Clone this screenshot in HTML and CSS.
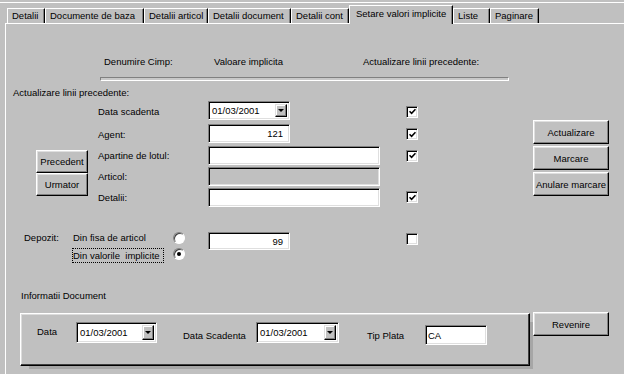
FILE: index.html
```html
<!DOCTYPE html>
<html lang="ro">
<head>
    <meta charset="UTF-8">
    <title>Setare valori implicite</title>
    <link rel="stylesheet" href="styles.css">
</head>
<body>
<div class="window">
    <!--taburi-->
    <div class="tabs">
        <div class="tab">Detalii</div>
        <div class="tab">Documente de baza</div>
        <div class="tab">Detalii articol</div>
        <div class="tab">Detalii document</div>
        <div class="tab">Detalii cont</div>
        <div class="tab active">Setare valori implicite</div>
        <div class="tab">Liste</div>
        <div class="tab">Paginare</div>
    </div>

    <div class="panel">
        <div class="colHeads">
            <span>Denumire Cimp:</span>
            <span>Valoare implicita</span>
            <span>Actualizare linii precedente:</span>
        </div>
        <div class="groove"></div>
        <div class="sectionTitle">Actualizare linii precedente:</div>

        <!--campuri-->
        <div class="rows">
            <div class="navBtns">
                <div class="btn">Precedent</div>
                <div class="btn">Urmator</div>
            </div>
            <div class="sideBtns">
                <div class="btn">Actualizare</div>
                <div class="btn">Marcare</div>
                <div class="btn">Anulare marcare</div>
            </div>

            <div class="lbl">Data scadenta</div>
            <div class="combo short">
                <span class="comboText">01/03/2001</span>
                <span class="dropBtn"><i class="arrow"></i></span>
            </div>
            <div class="checkCell"><span class="check on"><svg viewBox="0 0 7 7" width="7" height="7"><path d="M0.5 3.2 L2.6 5.3 L6.5 1.2" fill="none" stroke="#000" stroke-width="1.6"/></svg></span></div>

            <div class="lbl">Agent:</div>
            <div class="input short right">121</div>
            <div class="checkCell"><span class="check on"><svg viewBox="0 0 7 7" width="7" height="7"><path d="M0.5 3.2 L2.6 5.3 L6.5 1.2" fill="none" stroke="#000" stroke-width="1.6"/></svg></span></div>

            <div class="lbl">Apartine de lotul:</div>
            <div class="input"></div>
            <div class="checkCell"><span class="check on"><svg viewBox="0 0 7 7" width="7" height="7"><path d="M0.5 3.2 L2.6 5.3 L6.5 1.2" fill="none" stroke="#000" stroke-width="1.6"/></svg></span></div>

            <div class="lbl">Articol:</div>
            <div class="input disabled"></div>

            <div class="lbl">Detalii:</div>
            <div class="input"></div>
            <div class="checkCell"><span class="check on"><svg viewBox="0 0 7 7" width="7" height="7"><path d="M0.5 3.2 L2.6 5.3 L6.5 1.2" fill="none" stroke="#000" stroke-width="1.6"/></svg></span></div>
        </div>

        <!--depozit-->
        <div class="depozit">
            <div class="dLbl">Depozit:</div>
            <div class="dLbl">Din fisa de articol</div>
            <div class="radioCell"><span class="radio"></span></div>
            <div class="input short right dInput">99</div>
            <div class="dCheck"><span class="check"></span></div>
            <div class="focusLbl">Din valorile&nbsp; implicite</div>
            <div class="radioCell second"><span class="radio on"></span></div>
        </div>

        <div class="infoTitle">Informatii Document</div>

        <div class="bottom">
            <div class="groupBox">
                <span class="gLbl gData">Data</span>
                <div class="combo gCombo1">
                    <span class="comboText">01/03/2001</span>
                    <span class="dropBtn"><i class="arrow"></i></span>
                </div>
                <span class="gLbl gScad">Data Scadenta</span>
                <div class="combo gCombo2">
                    <span class="comboText">01/03/2001</span>
                    <span class="dropBtn"><i class="arrow"></i></span>
                </div>
                <span class="gLbl gTip">Tip Plata</span>
                <div class="input gInput">CA</div>
            </div>
            <div class="btn revenire">Revenire</div>
        </div>
    </div>
</div>
</body>
</html>
```

FILE: styles.css
```css
* {
    margin: 0;
    padding: 0;
    box-sizing: border-box;
}

html, body {
    height: 100%;
}

body {
    background: #c0c0c0;
    font-family: "Liberation Sans", Arial, sans-serif;
    font-size: 9.5px;
    color: #000;
    overflow: hidden;
    padding-top: 2px;
}

.window {
    display: flex;
    flex-direction: column;
    height: 100%;
    border-top: 1px solid #fff;
}

/* taburi */
.tabs {
    display: flex;
    align-items: flex-end;
    height: 20px;
    flex-shrink: 0;
    padding-left: 7px;
}

.tab {
    height: 15px;
    line-height: 13px;
    padding-left: 4px;
    border-top: 1px solid #fff;
    border-left: 1px solid #fff;
    border-right: 1px solid #000;
    box-shadow: inset -1px 0 #808080;
    white-space: nowrap;
    overflow: hidden;
}

.tab:nth-child(1) { width: 38px; }
.tab:nth-child(2) { width: 99px; }
.tab:nth-child(3) { width: 64px; }
.tab:nth-child(4) { width: 83px; }
.tab:nth-child(5) { width: 58px; }
.tab:nth-child(6) { width: 104px; }
.tab:nth-child(7) { width: 37px; }
.tab:nth-child(8) { width: 49px; }

.tab.active {
    position: relative;
    z-index: 1;
    height: 19px;
    line-height: 15px;
    padding-left: 6px;
    margin-bottom: -1px;
    background: #c0c0c0;
}

.panel {
    flex-grow: 1;
    min-height: 0;
    margin-left: 5px;
    border-top: 1px solid #fff;
    border-left: 1px solid #fff;
}

.colHeads {
    display: flex;
    height: 12px;
    line-height: 12px;
    margin-top: 32px;
    padding-left: 98px;
}

.colHeads > span:nth-child(1) { width: 110px; }
.colHeads > span:nth-child(2) { width: 149px; }

.groove {
    width: 409px;
    height: 4px;
    margin: 9px 0 0 94px;
    border: 1px solid;
    border-color: #808080 #fff #fff #808080;
    background: #c8c8c8;
}

.sectionTitle {
    line-height: 12px;
    margin: 6px 0 0 7px;
}

/* controale */
.btn {
    display: flex;
    align-items: center;
    justify-content: center;
    background: #c0c0c0;
    border: 1px solid;
    border-color: #fff #000 #000 #fff;
    box-shadow: inset -1px -1px #808080, inset 1px 1px #dfdfdf;
    white-space: nowrap;
}

.input, .combo {
    display: flex;
    align-items: center;
    height: 19px;
    background: #fff;
    border: 1px solid;
    border-color: #808080 #fff #fff #808080;
    box-shadow: inset 1px 1px #000, inset -1px -1px #dfdfdf;
    padding: 0 3px;
}

.input.right {
    justify-content: flex-end;
    padding-right: 6px;
}

.input.disabled {
    background: #c0c0c0;
}

.short {
    width: 82px;
}

.combo {
    padding: 2px 2px 2px 3px;
}

.comboText {
    flex-grow: 1;
}

.dropBtn {
    display: flex;
    align-items: center;
    justify-content: center;
    width: 12px;
    height: 100%;
    background: #c0c0c0;
    border: 1px solid;
    border-color: #dfdfdf #000 #000 #dfdfdf;
    box-shadow: inset -1px -1px #808080, inset 1px 1px #fff;
}

.arrow {
    width: 0;
    height: 0;
    border-left: 3px solid transparent;
    border-right: 3px solid transparent;
    border-top: 3px solid #000;
}

.check {
    display: flex;
    align-items: center;
    justify-content: center;
    width: 12px;
    height: 12px;
    background: #fff;
    border: 1px solid;
    border-color: #808080 #fff #fff #808080;
    box-shadow: inset 1px 1px #000, inset -1px -1px #dfdfdf;
}

.radio {
    display: flex;
    align-items: center;
    justify-content: center;
    width: 12px;
    height: 12px;
    border-radius: 50%;
    background: #fff;
    border: 1px solid;
    border-color: #808080 #fff #fff #808080;
    box-shadow: inset 1px 1px #404040;
}

.radio.on::after {
    content: "";
    width: 4px;
    height: 4px;
    border-radius: 50%;
    background: #000;
}

/* grila campuri */
.rows {
    display: grid;
    grid-template-columns: 52px 120px 172px 153px 76px;
    grid-template-rows: 23px 22px 21px 21px 20px;
    margin: 1px 0 0 30px;
}

.rows > .lbl {
    grid-column: 2;
    align-self: center;
    padding-left: 10px;
}

.rows > .input, .rows > .combo {
    grid-column: 3;
    align-self: start;
    margin-top: 1px;
}

.checkCell {
    grid-column: 4;
    align-self: center;
    padding-left: 26px;
}

.navBtns {
    grid-column: 1;
    grid-row: 3 / 6;
    display: flex;
    flex-direction: column;
    margin-top: 5px;
}

.navBtns > .btn {
    height: 23px;
}

.sideBtns {
    grid-column: 5;
    grid-row: 1 / 6;
    display: flex;
    flex-direction: column;
    gap: 2px;
    margin-top: 20px;
}

.sideBtns > .btn {
    height: 24px;
}

/* depozit */
.depozit {
    display: grid;
    grid-template-columns: 49px 100px 35px 198px 12px;
    grid-template-rows: 14px 20px;
    margin: 24px 0 0 18px;
}

.dLbl {
    line-height: 14px;
}

.radioCell {
    grid-column: 3;
    margin-top: 1px;
}

.radioCell.second {
    grid-row: 2;
    margin-top: 3px;
}

.dInput {
    height: 18px;
    margin-top: 1px;
}

.dCheck {
    margin-top: 2px;
}

.focusLbl {
    grid-column: 2;
    grid-row: 2;
    width: 92px;
    height: 15px;
    line-height: 13px;
    margin: 3px 0 0 -1px;
    border: 1px dotted #000;
    white-space: nowrap;
}

.infoTitle {
    line-height: 12px;
    margin: 25px 0 0 15px;
}

/* informatii document */
.bottom {
    display: flex;
    align-items: flex-start;
    margin-top: 10px;
}

.groupBox {
    display: flex;
    align-items: flex-start;
    width: 510px;
    height: 53px;
    margin: 1px 0 0 14px;
    padding-left: 16px;
    border-top: 1px solid #fff;
    border-left: 1px solid #fff;
    border-right: 1px solid #000;
    border-bottom: 1px solid #000;
    box-shadow: inset -1px -1px #404040, inset 1px 1px #dcdcdc, 6px 6px 0 -3px #a6a6a6;
}

.gLbl {
    line-height: 12px;
}

.gData {
    width: 39px;
    margin-top: 12px;
}

.gScad {
    width: 73px;
    margin: 16px 0 0 26px;
}

.gTip {
    width: 58px;
    margin: 16px 0 0 28px;
}

.gCombo1 {
    width: 81px;
    height: 21px;
    margin-top: 8px;
}

.gCombo2 {
    width: 83px;
    height: 21px;
    margin-top: 8px;
}

.gInput {
    width: 62px;
    height: 20px;
    margin-top: 11px;
    padding-left: 2px;
}

.revenire {
    width: 76px;
    height: 24px;
    margin-left: 3px;
}
```
